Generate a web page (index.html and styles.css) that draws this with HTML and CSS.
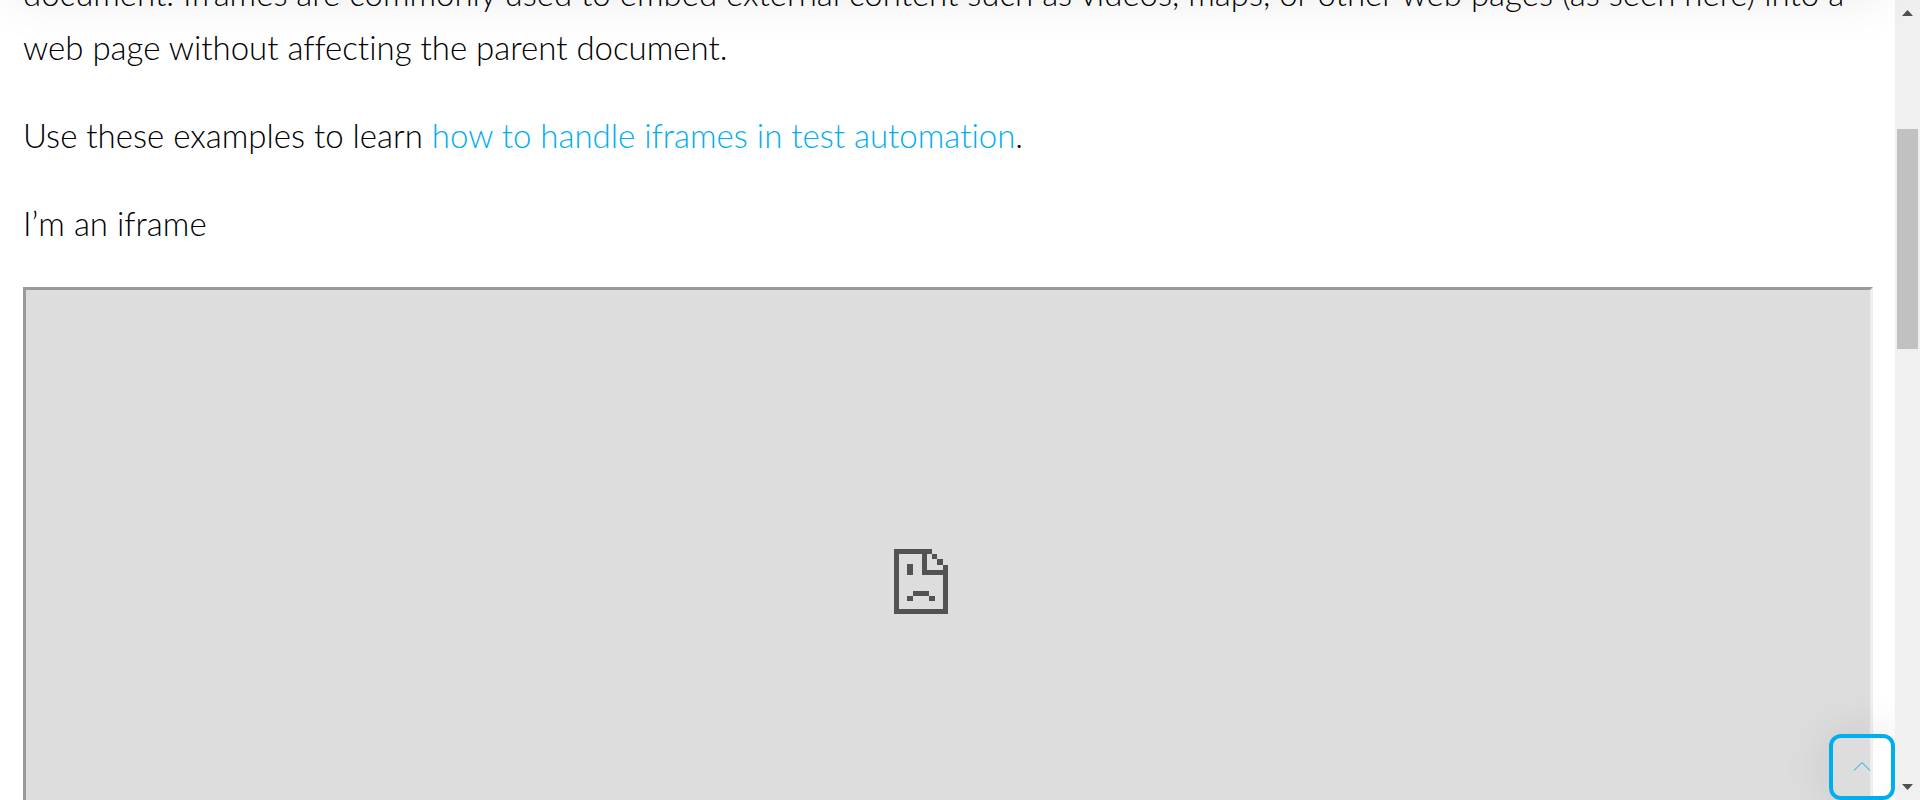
FILE: index.html
```html
<!DOCTYPE html>
<html lang="en">
<head>
<meta charset="utf-8">
<title>Iframes</title>
<link rel="stylesheet" href="styles.css">
</head>
<body>
<header class="site-header"></header>
<div class="shell">
  <main class="content">
    <p class="text">document. Iframes are commonly used to embed external content such as videos, maps, or other web pages (as seen here) into a web page without affecting the parent document.</p>
    <p class="text">Use these examples to learn <a class="link" href="#handle">how to handle iframes in test automation</a>.</p>
    <p class="text">I’m an iframe</p>
    <section class="frame" aria-label="Embedded page">
      <svg class="sad-page" width="108" height="66" viewBox="0 0 108 66" fill="#525252" aria-hidden="true">
        <path fill-rule="evenodd" d="M0 0H38V5H33V21H49V16H54V65H0ZM5 5V60H49V26H28V5Z"/>
        <path d="M38 5h5v5h-5zM43 10h6v6h-6zM13 15h6v11h-6zM19 42h16v5H19zM13 47h6v5h-6zM35 47h6v5h-6z"/>
      </svg>
    </section>
  </main>
  <div class="scrollbar" aria-hidden="true">
    <svg class="arrow" width="11" height="6" viewBox="0 0 11 6"><path d="M0 6L5.500 0L11 6z"/></svg>
    <div class="track"><div class="thumb"></div></div>
    <svg class="arrow" width="11" height="6" viewBox="0 0 11 6"><path d="M0 0L5.500 6L11 0z"/></svg>
  </div>
</div>
<button class="to-top" type="button" aria-label="Back to top">
  <svg width="18" height="10" viewBox="0 0 18 10" fill="none" stroke="#00aeef"><path d="M1 9.500L9 1.500L17 9.500"/></svg>
</button>
</body>
</html>
```
FILE: styles.css
```css
* { box-sizing: border-box; }
body {
  margin: 0;
  background: #fff;
  color: #000;
  font-family: Lato, "Open Sans", sans-serif;
  font-size: 33px;
  font-weight: 300;
  line-height: 54px;
}
.site-header {
  position: fixed;
  top: -80px;
  left: 10px;
  right: 35px;
  height: 80px;
  box-shadow: 0 0 50px rgba(0, 0, 0, 0.08);
}
.shell {
  display: flex;
  height: 100vh;
  overflow: hidden;
}
.content {
  flex: 1;
  min-width: 0;
  padding: 0 22px 0 23px;
  margin-top: -34px;
}
.text {
  margin: 0 0 34px;
  font-variant-ligatures: no-common-ligatures;
}
.link { color: #00aeef; text-decoration: none; }
.frame {
  display: flex;
  align-items: center;
  justify-content: center;
  height: 589px;
  margin-top: 37px;
  border: 3px solid;
  border-color: #9a9a9a #eee #eee #9a9a9a;
  background: #ddd;
}
.scrollbar {
  display: flex;
  flex-direction: column;
  align-items: center;
  width: 25px;
  padding: 10px 2px;
  background: #f0f0f0;
}
.arrow { flex: none; fill: #505050; }
.track {
  flex: 1;
  width: 21px;
  padding-top: 113px;
}
.thumb { height: 220px; background: #c1c1c1; }
.to-top {
  position: fixed;
  right: 25px;
  bottom: 0;
  display: flex;
  align-items: center;
  justify-content: center;
  width: 66px;
  height: 66px;
  padding: 0 0 3px;
  border: 4px solid #00aeef;
  border-radius: 12px;
  background: transparent;
  box-shadow: 0 0 50px rgba(0, 0, 0, 0.1);
  clip-path: inset(-60px 0 0 -60px);
}
```
